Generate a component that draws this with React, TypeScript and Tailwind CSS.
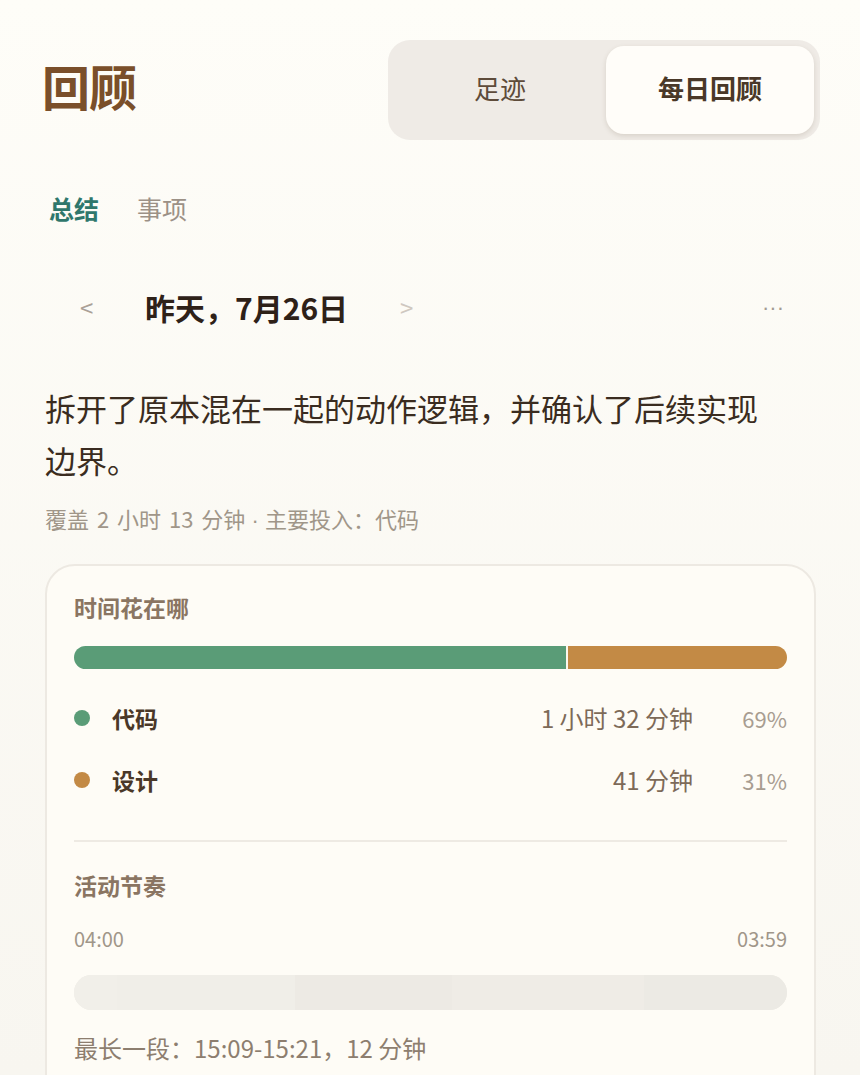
import React from "react";

const font = { fontFamily: '"Noto Sans CJK SC", "Noto Sans", sans-serif' };

export default function App() {
  return (
    <div
      className="w-[860px] h-[1075px] overflow-hidden bg-gradient-to-b from-[#fefdf8] to-[#f8f6f0]"
      style={font}
    >
      <div className="px-[42px] pt-[40px]">
        {/* header */}
        <div className="flex items-center justify-between h-[100px]">
          <h1 className="mb-[10px] text-[48px] leading-none font-bold text-[#7a4f2a] tracking-[-1px]">回顾</h1>
          <div className="flex w-[432px] h-[100px] rounded-[22px] bg-[#efebe6] p-[6px] mr-[-2px]">
            <div className="flex-1 flex items-center justify-center pb-[5px] text-[26px] text-[#5e4b3a]">足迹</div>
            <div className="w-[208px] flex items-center justify-center pb-[5px] rounded-[18px] bg-[#fffdf9] shadow-[0_2px_5px_rgba(90,70,40,0.15)] text-[26px] font-bold text-[#4a3828]">
              每日回顾
            </div>
          </div>
        </div>

        {/* tabs */}
        <div className="flex gap-[38px] mt-[53px] pl-[7px] text-[25px] leading-[30px]">
          <span className="font-bold text-[#2f776c]">总结</span>
          <span className="text-[#9c9186]">事项</span>
        </div>

        {/* date row */}
        <div className="flex items-center mt-[64px] h-[40px]">
          <span className="w-[103px] pl-[38px] text-[24px] text-[#aaa097]">&lt;</span>
          <span className="text-[30px] font-bold text-[#2e2118]">昨天，7月26日</span>
          <span className="ml-[52px] text-[24px] text-[#cfc8c0]">&gt;</span>
          <span
            className="ml-auto mr-[34px] text-[22px] text-[#a39b93]"
            style={{ fontFamily: '"Liberation Sans", sans-serif' }}
          >
            ···
          </span>
        </div>

        {/* summary */}
        <p className="mt-[55px] pl-[3px] text-[31px] leading-[52px] text-[#3a2c20]">
          拆开了原本混在一起的动作逻辑，并确认了后续实现
          <br />
          边界。
        </p>
        <p className="mt-[17px] pl-[3px] text-[22px] leading-[30px] text-[#a09689]">
          <span className="[word-spacing:3px]">覆盖 2 小时 13 分钟</span>
          <span style={{ fontFamily: '"Liberation Sans", sans-serif' }}> · </span>
          主要投入：代码
        </p>

        {/* card */}
        <div className="mt-[28px] ml-[3px] w-[771px] h-[600px] rounded-[30px] border-2 border-[#ede9e2] bg-[#fefcf6] px-[27px] pt-[26px]">
          <div className="text-[23px] leading-[30px] font-bold text-[#8a7562]">时间花在哪</div>
          <div className="flex mt-[24px] h-[23px] rounded-full overflow-hidden">
            <div className="w-[69%] bg-[#5a9c77]" />
            <div className="w-[2px] bg-[#fdf8ee]" />
            <div className="flex-1 bg-[#c38a45]" />
          </div>

          <div className="mt-[34px] flex items-center h-[30px]">
            <span className="w-[16px] h-[16px] rounded-full bg-[#5a9c77]" />
            <span className="ml-[22px] text-[23px] font-bold text-[#4a3828]">代码</span>
            <span className="ml-auto text-[24px] text-[#7d6a58]">1 小时 32 分钟</span>
            <span className="w-[94px] text-right text-[22px] text-[#a89d91]">69%</span>
          </div>
          <div className="mt-[32px] flex items-center h-[30px]">
            <span className="w-[16px] h-[16px] rounded-full bg-[#c38a45]" />
            <span className="ml-[22px] text-[23px] font-bold text-[#4a3828]">设计</span>
            <span className="ml-auto text-[24px] text-[#7d6a58]">41 分钟</span>
            <span className="w-[94px] text-right text-[22px] text-[#a89d91]">31%</span>
          </div>

          <div className="mt-[45px] h-[2px] bg-[#eeeae3]" />

          <div className="mt-[28px] text-[23px] leading-[30px] font-bold text-[#8a7562]">活动节奏</div>
          <div className="mt-[27px] flex justify-between text-[20px] leading-[24px] text-[#a09689]">
            <span>04:00</span>
            <span>03:59</span>
          </div>
          <div className="mt-[24px] flex h-[35px] rounded-full overflow-hidden bg-[#efece6]">
            <div className="w-[6%] bg-[#f1efe9]" />
            <div className="w-[25%] bg-[#f0eee8]" />
            <div className="w-[22%] bg-[#edeae4]" />
            <div className="w-[27%] bg-[#efece6]" />
            <div className="flex-1 bg-[#eceae4]" />
          </div>
          <div className="mt-[23px] text-[24px] leading-[30px] text-[#8d7e6f]">
            最长一段：15:09-15:21，12 分钟
          </div>
        </div>
      </div>
    </div>
  );
}
